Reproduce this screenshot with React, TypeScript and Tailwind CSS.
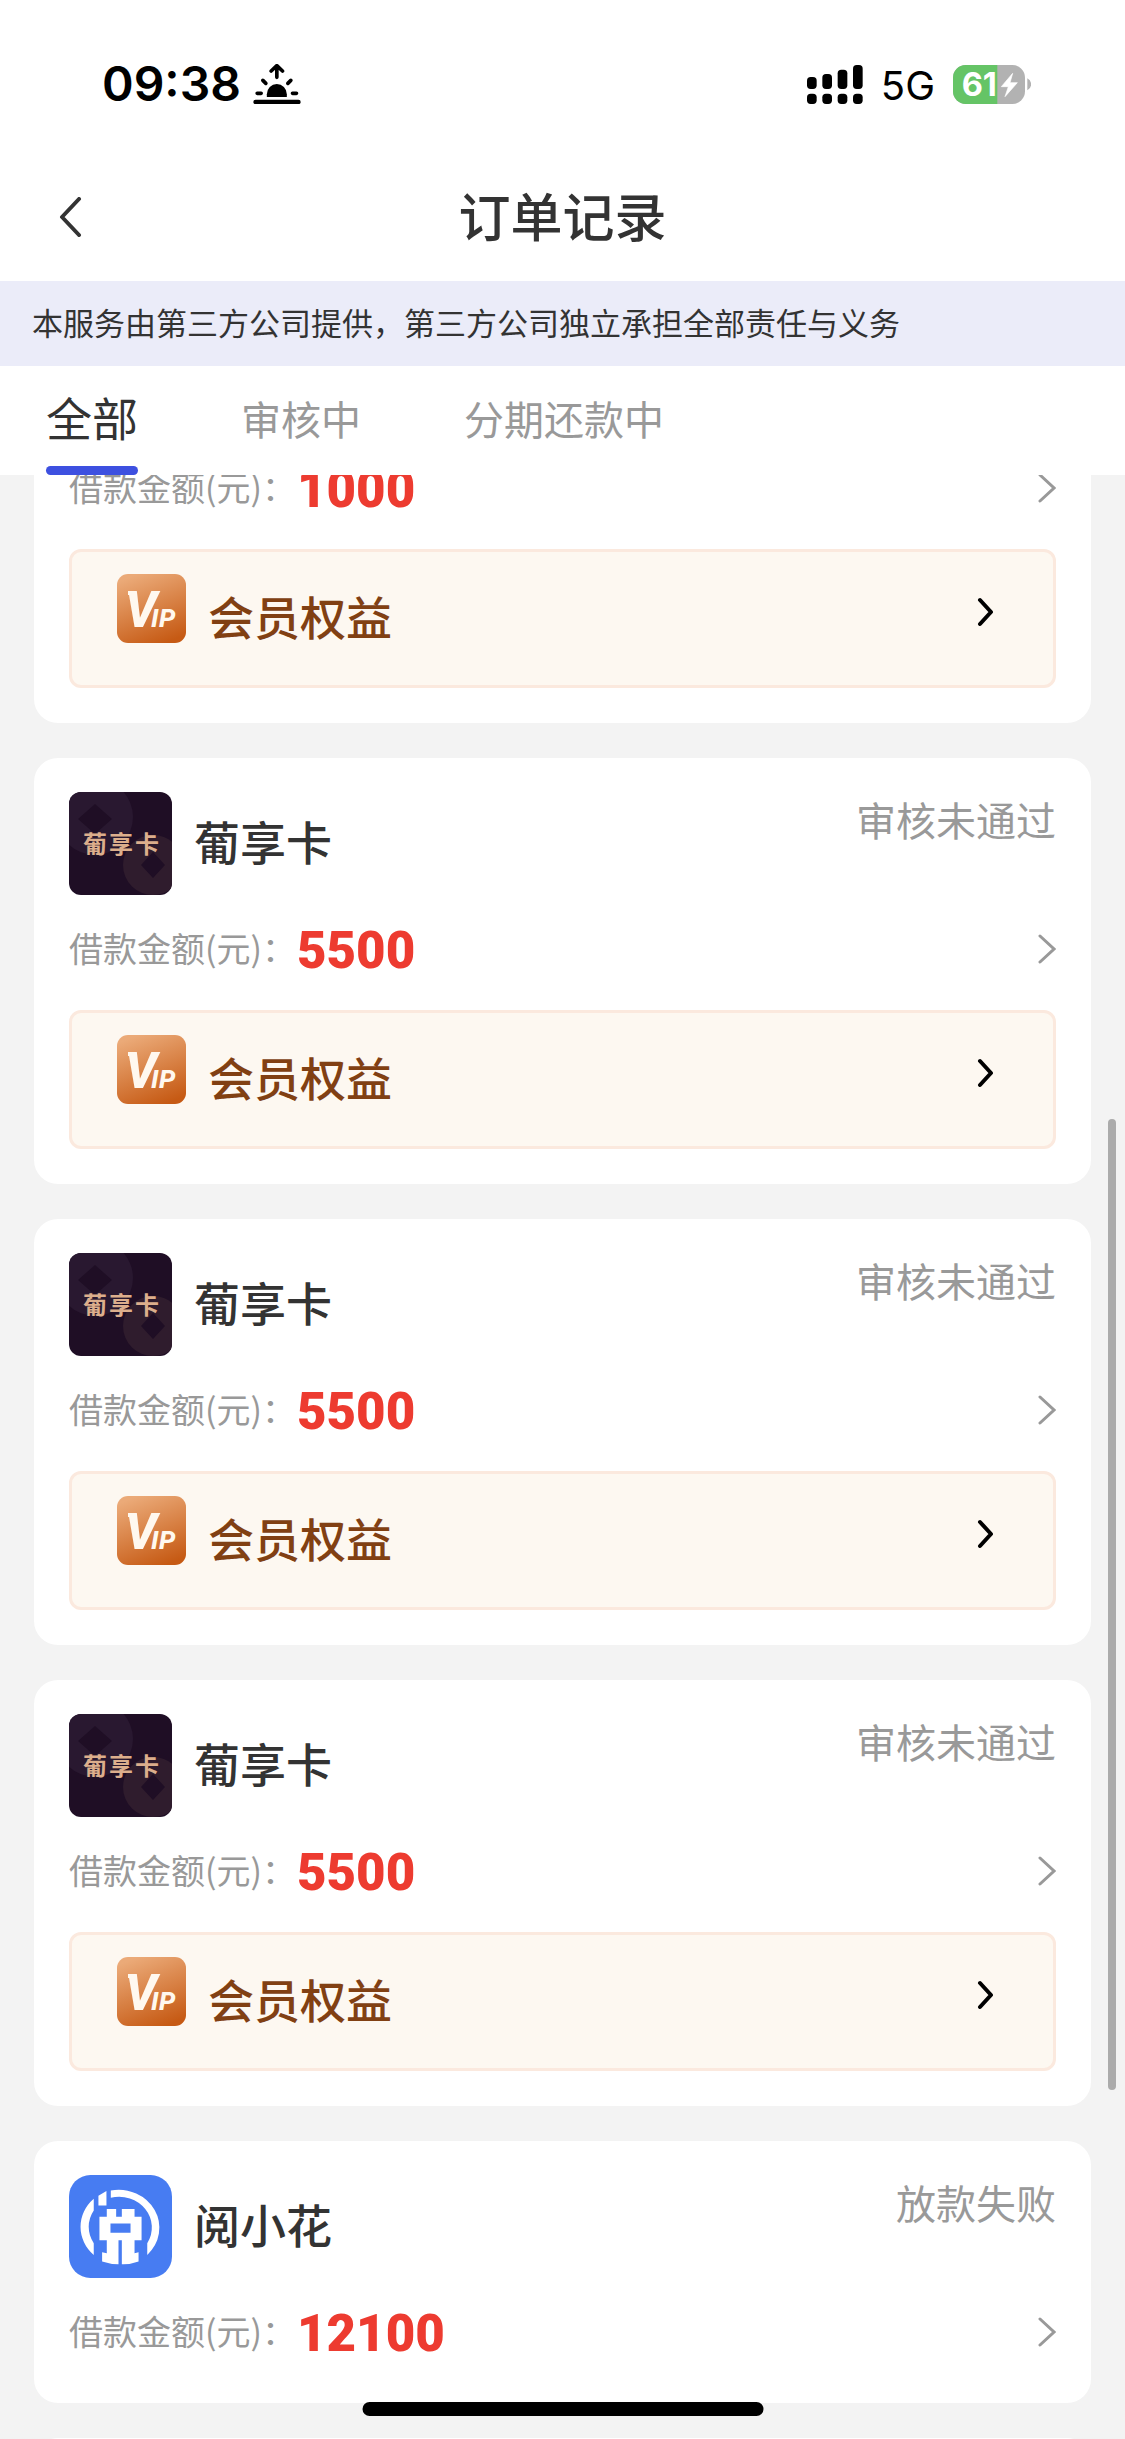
import React, { useLayoutEffect, useRef } from "react";

type Order = {
  id: number;
  name: string;
  logo: "puxiang" | "yuexiaohua";
  status: string;
  amount: string;
  vip: boolean;
};

const tabs = ["全部", "审核中", "分期还款中"];

const orders: Order[] = [
  { id: 1, name: "葡享卡", logo: "puxiang", status: "审核未通过", amount: "1000", vip: true },
  { id: 2, name: "葡享卡", logo: "puxiang", status: "审核未通过", amount: "5500", vip: true },
  { id: 3, name: "葡享卡", logo: "puxiang", status: "审核未通过", amount: "5500", vip: true },
  { id: 4, name: "葡享卡", logo: "puxiang", status: "审核未通过", amount: "5500", vip: true },
  { id: 5, name: "阅小花", logo: "yuexiaohua", status: "放款失败", amount: "12100", vip: false },
];

const SunriseIcon = () => (
  <svg viewBox="522 72 143 120" className="w-12 h-10" aria-hidden="true">
    <g fill="none" stroke="#000" strokeWidth="11" strokeLinecap="round" strokeLinejoin="round">
      <path d="M593 112V80M576 93l17-16 17 16" />
      <path d="M551 121l9 9M635 121l-9 9M534 160h12M640 160h12" />
      <path d="M529 186h129" strokeWidth="13" />
    </g>
    <path d="M563 171v-8a30 31 0 0 1 60 0v8z" />
  </svg>
);

const SignalIcon = () => (
  <svg viewBox="81 72 168 117" className="w-14 h-[39px]" aria-hidden="true">
    <rect x="81" y="108" width="29" height="36" rx="11" />
    <rect x="127" y="99" width="29" height="45" rx="11" />
    <rect x="173" y="86" width="29" height="58" rx="11" />
    <rect x="219" y="72" width="29" height="72" rx="11" />
    <rect x="81" y="158" width="29" height="31" rx="11" />
    <rect x="127" y="158" width="29" height="31" rx="11" />
    <rect x="173" y="158" width="29" height="31" rx="11" />
    <rect x="219" y="158" width="29" height="31" rx="11" />
  </svg>
);

const BatteryIcon = () => (
  <svg viewBox="519 72 234 117" className="w-[78px] h-[39px]">
    <rect x="519" y="72" width="216" height="117" rx="38" fill="#b2b2b2" />
    <path d="M652 72H557a38 38 0 0 0-38 38v41a38 38 0 0 0 38 38h95z" fill="#65c466" />
    <path d="M742 112a20 20 0 0 1 0 36z" fill="#b2b2b2" />
    <text x="545" y="166" fill="#fff" fontSize="98" fontWeight="700" fontFamily="Inter, sans-serif">
      61
    </text>
    <path d="M698 97l-34 40h21l-10 30 37-42h-22z" fill="#fff" stroke="#fff" strokeWidth="2" strokeLinejoin="round" />
  </svg>
);

const PuxiangLogo = () => (
  <svg viewBox="0 0 103 103" className="w-[103px] h-[103px] rounded-xl shrink-0" aria-hidden="true">
    <rect width="103" height="103" fill="#1f0e25" />
    <circle cx="26" cy="25" r="38" fill="#291830" />
    <path d="M26 12l17 15-17 15L9 27z" fill="#1f0e25" />
    <circle cx="84" cy="73" r="30" fill="#2f1c2d" />
    <path d="M84 60l12 13-12 13-12-13z" fill="#1f0e25" />
    <text
      x="14 40 66"
      y="61"
      fill="#dcae8c"
      fontSize="24"
      fontWeight="700"
      fontFamily="'Noto Sans CJK SC', sans-serif"
    >
      葡享卡
    </text>
  </svg>
);

const YuexiaohuaLogo = () => (
  <svg viewBox="27 28 308 308" className="w-[103px] h-[103px] shrink-0" aria-hidden="true">
    <rect x="27" y="28" width="308" height="308" rx="64" fill="#477cf2" />
    <g fill="#fff">
      <path d="M101 99A122 114 0 0 0 101 267V232A98 92 0 0 1 101 134z" />
      <path d="M152 74A122 114 0 0 1 261 267V232A98 92 0 0 0 152 96z" />
      <path d="M115 90l24-14v43h-24z" />
      <path
        fillRule="evenodd"
        d="M140 130h28v23h17v-23h38v23h21v70h-21v39l12-3v28q-24 9-50 8v-72h-10v72q-26 0-49-8v-28l14 3v-39h-22v-70h22zM151 173v28h60v-28z"
      />
    </g>
  </svg>
);

const VipIcon = () => (
  <svg viewBox="0 0 69 69" className="w-[69px] h-[69px] shrink-0" role="img" aria-label="VIP">
    <defs>
      <linearGradient id="vip-bg" x1="0.3" y1="0" x2="0.7" y2="1">
        <stop offset="0" stopColor="#ebaa78" />
        <stop offset="1" stopColor="#c65a14" />
      </linearGradient>
    </defs>
    <rect width="69" height="69" rx="11" fill="url(#vip-bg)" />
    <rect x="11" y="17" width="8" height="4" fill="#fff8ef" />
    <text
      x="8 34 42"
      y="53"
      fontSize="50"
      fill="#fff8ef"
      fontFamily="Roboto, sans-serif"
      fontStyle="italic"
      fontWeight="800"
    >
      V<tspan fontSize="26">IP</tspan>
    </text>
  </svg>
);

const OrderCard = ({ order }: { order: Order }) => {
  return (
    <article className="bg-white rounded-3xl px-[35px] pt-[34px] pb-[35px]">
      <div className="flex items-center">
        {order.logo === "puxiang" ? <PuxiangLogo /> : <YuexiaohuaLogo />}
        <h2 className="ml-[22px] pb-2 text-[46px] leading-[58px] font-medium">{order.name}</h2>
        <span className="ml-auto self-start text-[40px] leading-[54px] text-[#999]">{order.status}</span>
      </div>

      <a href="#detail" className="mt-[18px] h-[72px] flex items-center">
        <span className="pb-1 text-[34px] text-[#999]">借款金额(元)：</span>
        <span className="ml-px pt-1 font-[Roboto,sans-serif] text-[51px] leading-[72px] font-black text-[#ed3b30]">
          {order.amount}
        </span>
        <svg viewBox="0 0 18 30" className="ml-auto w-[18px] h-[30px]" aria-hidden="true">
          <path d="M2 2l14 13L2 28" fill="none" stroke="#999" strokeWidth="3" strokeLinecap="round" />
        </svg>
      </a>

      {order.vip && (
        <button
          type="button"
          className="mt-[25px] w-full h-[139px] flex items-start rounded-xl border-3 border-[#fbe9de] bg-[#fdf8f1] pl-[45px] pr-[60px] pt-[22px]"
        >
          <VipIcon />
          <span className="ml-[22px] text-[46px] leading-[82px] font-medium text-[#814013]">会员权益</span>
          <svg viewBox="0 0 16 76" className="ml-auto w-4 h-[76px]" aria-hidden="true">
            <path
              d="M3 26l11 12L3 50"
              fill="none"
              stroke="#000"
              strokeWidth="4"
              strokeLinecap="round"
              strokeLinejoin="round"
            />
          </svg>
        </button>
      )}
    </article>
  );
};

const App = () => {
  const listRef = useRef<HTMLElement>(null);

  useLayoutEffect(() => {
    if (listRef.current) {
      listRef.current.scrollTop = 178;
    }
  }, []);

  return (
    <div className="relative h-screen flex flex-col overflow-hidden bg-[#f3f3f3] text-[#333] font-['Noto_Sans_CJK_SC',sans-serif]">
      <div className="h-[152px] pt-4 pl-[102px] pr-[94px] flex items-center justify-between bg-white text-black font-[Inter,sans-serif]">
        <div className="flex items-center gap-3">
          <span className="text-[48px] font-semibold">09:38</span>
          <SunriseIcon />
        </div>
        <div className="flex items-center gap-[18px]">
          <SignalIcon />
          <span className="pt-1 text-[40px]">5G</span>
          <BatteryIcon />
        </div>
      </div>

      <header className="h-[129px] px-[58px] grid grid-cols-[24px_1fr_24px] items-center bg-white">
        <button type="button" aria-label="返回">
          <svg viewBox="0 0 24 40" className="w-6 h-10" aria-hidden="true">
            <path
              d="M21 2L4 20l17 18"
              fill="none"
              stroke="#333"
              strokeWidth="4"
              strokeLinecap="round"
              strokeLinejoin="round"
            />
          </svg>
        </button>
        <h1 className="pb-1 text-center text-[52px] leading-[64px] font-medium">订单记录</h1>
      </header>

      <p className="px-8 pb-1 text-[31px] leading-[81px] bg-[#ebecf9]">
        本服务由第三方公司提供，第三方公司独立承担全部责任与义务
      </p>

      <nav className="h-[109px] pl-[46px] flex gap-[103px] bg-white">
        {tabs.map((tab, i) => (
          <button
            key={tab}
            type="button"
            className={
              i === 0
                ? "flex flex-col text-[46px] leading-[100px]"
                : "flex flex-col text-[40px] leading-[104px] text-[#999]"
            }
          >
            {tab}
            {i === 0 && <span className="w-full h-[9px] rounded-full bg-[#3d50e0]" />}
          </button>
        ))}
      </nav>

      <main
        ref={listRef}
        className="flex-1 min-h-0 overflow-y-auto [scrollbar-width:none] px-[34px]"
      >
        <div className="flex flex-col gap-[35px]">
          {orders.map((order) => (
            <OrderCard key={order.id} order={order} />
          ))}
          <div className="h-[264px] bg-white rounded-3xl" />
        </div>
      </main>

      <div className="absolute right-[9px] top-[1119px] w-2 h-[971px] rounded-full bg-[#ababab]" />
      <div className="absolute bottom-[23px] left-1/2 -translate-x-1/2 w-[401px] h-[14px] rounded-full bg-black" />
    </div>
  );
};

export default App;
